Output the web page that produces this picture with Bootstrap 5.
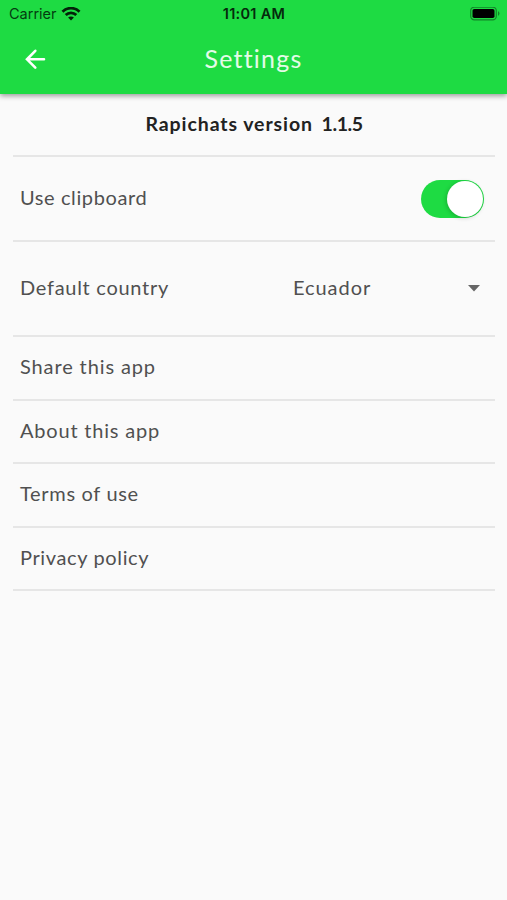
<!DOCTYPE html>
<html lang="en">
<head>
<meta charset="utf-8">
<meta name="viewport" content="width=device-width, initial-scale=1">
<title>Settings</title>
<link href="https://cdn.jsdelivr.net/npm/bootstrap@5.3.0/dist/css/bootstrap.min.css" rel="stylesheet">
<style>
body{background:#fafafa;color:#505050;font-family:Lato,"Open Sans",sans-serif;font-size:20px;line-height:24px;min-height:100vh}
.app-header{height:94px;background:#1edb43;box-shadow:0 2px 5px rgba(0,0,0,.38)}
.status{height:28px;padding:0 6px 0 9px;color:#043c10;font:14.5px/28px Inter,sans-serif}
.side{flex:1 1 0}
.clock{font-size:14.5px;font-weight:600;letter-spacing:.3px;color:#05290c;margin-right:2px}
.toolbar{height:62px;padding:0 24px}
.page-title{font-size:25px;line-height:30px;letter-spacing:1.2px;color:#e4fbe8;padding-bottom:2px}
.settings-list{padding:0 12px 0 13px}
.setting{border-bottom:2px solid #e6e6e6;padding:0 7px 3px;height:63.6px}
.version{height:63.4px;color:#222;font-size:19.5px;font-weight:700;letter-spacing:.92px;white-space:pre;padding-bottom:2px}
.number{letter-spacing:-.45px}
.tall{height:84.6px}
.taller{height:95px}
.toggle{width:63px;height:38px;border-radius:19px;background:#1edb43;padding:1px 1px;margin-right:4px}
.knob{width:36px;height:36px;border-radius:50%;background:#fff;box-shadow:-1px 1px 4px rgba(0,0,0,.2)}
.country{width:187px;margin-right:8px}
.t1{letter-spacing:.6px}.t2{letter-spacing:.72px}.t3{letter-spacing:.95px}.t4{letter-spacing:.88px}.t5{letter-spacing:.8px}.t6{letter-spacing:.68px}.t7{letter-spacing:.63px}
</style>
</head>
<body>
<header class="app-header position-relative">
  <div class="status d-flex align-items-center">
    <div class="side d-flex align-items-center"><span class="carrier">Carrier</span>
      <svg class="ms-1" width="20" height="15" viewBox="0 0 20 15" fill="none" stroke="#032109" stroke-width="2.8"><path d="M1.5 4.7C6.2 0 13.8 0 18.5 4.7M4.7 8.1c3-2.9 7.6-2.9 10.6 0"/><path d="M7.1 10.5c1.6-1.5 4.2-1.5 5.8 0L10 13.5z" fill="#032109" stroke="none"/></svg>
    </div>
    <span class="clock">11:01 AM</span>
    <div class="side d-flex justify-content-end">
      <svg width="31" height="14" viewBox="0 0 31 14"><rect x=".7" y=".2" width="25.6" height="12.6" rx="3.6" fill="none" stroke="#128529" stroke-width="1.2"/><rect x="2.5" y="2" width="22" height="9" rx="1.8"/><path d="M28 4q3 2.5 0 5z" fill="#128529"/></svg>
    </div>
  </div>
  <div class="toolbar d-flex align-items-center">
    <div class="side d-flex"><svg width="24" height="22" viewBox="0 0 24 22" fill="none" stroke="#fff" stroke-width="2.6" stroke-linecap="round"><path d="M20 11.3H3.5M11.3 2.8L3 11.3l8.3 8.3"/></svg></div>
    <h1 class="page-title fw-normal m-0">Settings</h1>
    <div class="side"></div>
  </div>
</header>
<main class="settings-list">
  <div class="setting version d-flex align-items-center justify-content-center"><span>Rapichats version<span class="number">  1.1.5</span></span></div>
  <div class="setting tall d-flex align-items-center justify-content-between"><span class="t1">Use clipboard</span>
    <div class="toggle d-flex justify-content-end mt-1" role="switch" aria-checked="true" aria-label="Use clipboard"><div class="knob"></div></div></div>
  <div class="setting taller d-flex align-items-center justify-content-between"><span class="t2">Default country</span>
    <div class="country d-flex align-items-center justify-content-between"><span class="t3">Ecuador</span><svg class="mt-1" width="12" height="7" viewBox="0 0 12 7"><path d="M0 0h12L6 6.5z" fill="#666"/></svg></div></div>
  <div class="setting d-flex align-items-center"><span class="t4">Share this app</span></div>
  <div class="setting d-flex align-items-center"><span class="t5">About this app</span></div>
  <div class="setting d-flex align-items-center"><span class="t6">Terms of use</span></div>
  <div class="setting d-flex align-items-center"><span class="t7">Privacy policy</span></div>
</main>
<script src="https://cdn.jsdelivr.net/npm/bootstrap@5.3.0/dist/js/bootstrap.bundle.min.js"></script>
</body>
</html>
